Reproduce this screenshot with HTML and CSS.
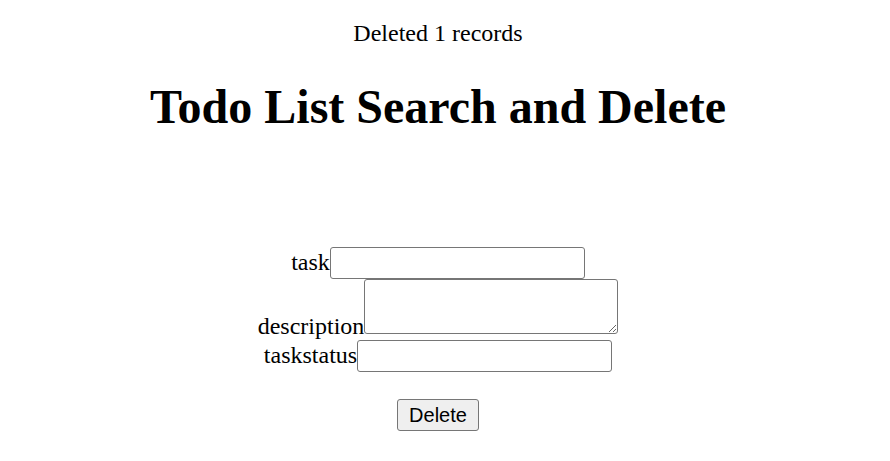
FILE: index.html
```html
<!DOCTYPE html>
<html>
<head>
<meta charset="utf-8">
<link rel="stylesheet" href="styles.css">
<title>Todo List Search and Delete</title>
</head>
<body>
<div class="page">
  <p class="status">Deleted 1 records</p>
  <h1 class="title">Todo List Search and Delete</h1>
  <form class="form">
    <div class="row"><label class="label">task</label><input class="field" type="text"></div>
    <div class="row"><label class="label">description</label><textarea class="area"></textarea></div>
    <div class="row"><label class="label">taskstatus</label><input class="field" type="text"></div>
    <div class="actions"><button class="btn" type="button">Delete</button></div>
  </form>
</div>
</body>
</html>
```

FILE: styles.css
```css
html, body {
  margin: 0;
  padding: 0;
  background: #ffffff;
}
.page {
  padding: 0 26.5px 0 12.5px;
  text-align: center;
  font-family: "Liberation Serif", "Times New Roman", serif;
  font-size: 24px;
  color: #000;
}
.status {
  margin: 0;
  padding-top: 20px;
}
.title {
  margin: 32px 0;
  font-size: 48px;
  font-weight: bold;
}
.form {
  margin: 0;
  padding-top: 81px;
}
.row {
  text-align: center;
}
.label {
  vertical-align: baseline;
}
.field {
  box-sizing: border-box;
  width: 255px;
  height: 32px;
  margin: 0;
  padding: 1px 3px;
  border: 1px solid #767676;
  border-radius: 3px;
  font-family: "Liberation Sans", Arial, sans-serif;
  font-size: 20px;
  background: #fff;
  vertical-align: baseline;
}
.area {
  box-sizing: border-box;
  width: 254px;
  height: 55px;
  margin: 0;
  padding: 3px;
  border: 1px solid #767676;
  border-radius: 3px;
  font-family: "Liberation Mono", monospace;
  font-size: 20px;
  background: #fff;
  vertical-align: baseline;
}
.actions {
  margin-top: 27px;
}
.btn {
  box-sizing: border-box;
  width: 82px;
  height: 32px;
  margin: 0;
  padding: 1px 9px;
  border: 1px solid #767676;
  border-radius: 3px;
  background: #efefef;
  font-family: "Liberation Sans", Arial, sans-serif;
  font-size: 20px;
  color: #000;
}
```
